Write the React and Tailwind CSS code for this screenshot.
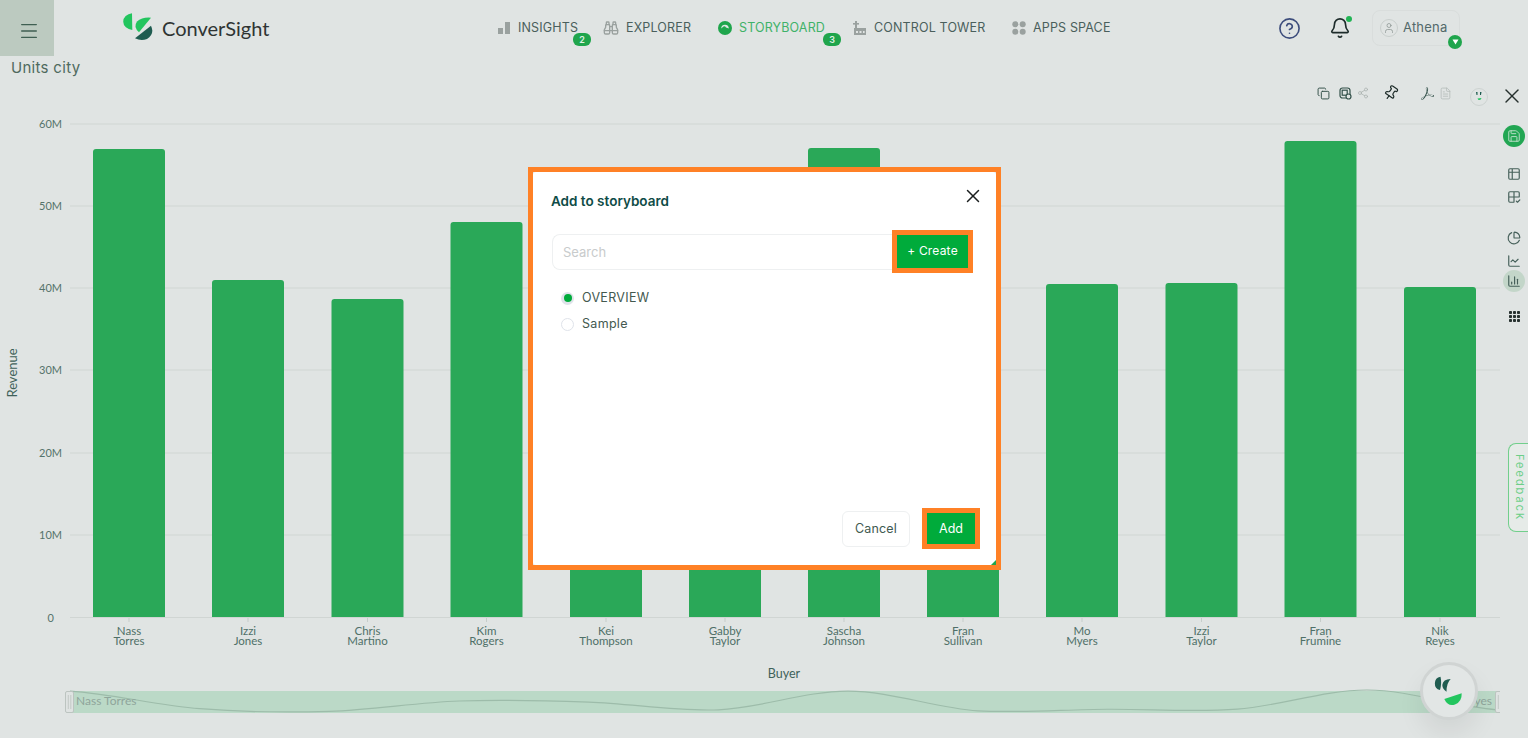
import { Menu, CircleHelp, Bell, User, Binoculars, Copy, Share2, Pin, FileText, X, Save, Table2, Grid2x2Check, ChartPie, ChartLine, ChartColumn } from 'lucide-react';
import { SiAdobeacrobatreader } from 'react-icons/si';

const GRID = [
  { y: 124, label: '60M' },
  { y: 206, label: '50M' },
  { y: 288, label: '40M' },
  { y: 370, label: '30M' },
  { y: 453, label: '20M' },
  { y: 535, label: '10M' },
  { y: 617.5, label: '0' },
];

const BARS = [
  { x: 129, top: 149, a: 'Nass', b: 'Torres', v: 57 },
  { x: 248, top: 280, a: 'Izzi', b: 'Jones', v: 41 },
  { x: 367.5, top: 299, a: 'Chris', b: 'Martino', v: 38.6 },
  { x: 486.5, top: 222, a: 'Kim', b: 'Rogers', v: 48 },
  { x: 606, top: 300, a: 'Kei', b: 'Thompson', v: 47 },
  { x: 725, top: 300, a: 'Gabby', b: 'Taylor', v: 40 },
  { x: 844, top: 148, a: 'Sascha', b: 'Johnson', v: 57 },
  { x: 963, top: 300, a: 'Fran', b: 'Sullivan', v: 39 },
  { x: 1082, top: 284, a: 'Mo', b: 'Myers', v: 40.5 },
  { x: 1201.5, top: 283, a: 'Izzi', b: 'Taylor', v: 40.6 },
  { x: 1320.5, top: 141, a: 'Fran', b: 'Frumine', v: 58 },
  { x: 1440, top: 287, a: 'Nik', b: 'Reyes', v: 40 },
];

// slider preview line, catmull-rom through the bar values
const wavePath = () => {
  const pts = BARS.map((b, i) => [70 + i * 129.7, 712 - (b.v - 38) * 1.1]);
  let d = `M${pts[0][0]} ${pts[0][1]}`;
  for (let i = 0; i < pts.length - 1; i++) {
    const p0 = pts[i - 1] || pts[i];
    const p1 = pts[i];
    const p2 = pts[i + 1];
    const p3 = pts[i + 2] || p2;
    const c1y = Math.min(713, p1[1] + (p2[1] - p0[1]) / 6);
    const c2y = Math.min(713, p2[1] - (p3[1] - p1[1]) / 6);
    d += ` C${p1[0] + 43} ${c1y} ${p2[0] - 43} ${c2y} ${p2[0]} ${p2[1]}`;
  }
  return d;
};

const Chart = () => (
  <svg viewBox="0 104 1500 634" className="block w-[1500px] h-[634px]" style={{ fontFamily: 'Lato, sans-serif' }}>
    {GRID.map((g) => (
      <g key={g.label}>
        <line x1="70" x2="1500" y1={g.y} y2={g.y} stroke="#d0d5d3" strokeWidth="1.2" />
        <text x={g.label === '0' ? 54 : 62} y={g.y + 4} textAnchor="end" fontSize="11" fill="#55736b">{g.label}</text>
      </g>
    ))}
    {BARS.map((b) => (
      <g key={b.x + b.b}>
        <path d={`M${b.x - 36} 617 V${b.top + 3} Q${b.x - 36} ${b.top} ${b.x - 33} ${b.top} H${b.x + 33} Q${b.x + 36} ${b.top} ${b.x + 36} ${b.top + 3} V617 Z`} fill="#2aa858" />
        <line x1={b.x} x2={b.x} y1="618" y2="622" stroke="#c6cdca" />
        <text x={b.x} y="635" textAnchor="middle" fontSize="11.5" fill="#4f7068">{b.a}</text>
        <text x={b.x} y="645" textAnchor="middle" fontSize="11.5" fill="#4f7068">{b.b}</text>
      </g>
    ))}
    <text x="17" y="373" textAnchor="middle" fontSize="13" fill="#3f625a" transform="rotate(-90 17 373)">Revenue</text>
    <text x="784" y="678" textAnchor="middle" fontSize="12.5" fill="#3f625a">Buyer</text>

    <rect x="70" y="691" width="1428" height="22" fill="#bbd9c7" />
    <path d={wavePath()} fill="none" stroke="#9dbcaa" strokeWidth="1.2" />
    <text x="76" y="705" fontSize="12" fill="#8fa59b">Nass Torres</text>
    <text x="1492" y="705" textAnchor="end" fontSize="12" fill="#8fa59b">Nik Reyes</text>
    <rect x="65.5" y="691.5" width="8" height="21" rx="1.5" fill="#dfe3e2" stroke="#bcc4c0" />
    <path d="M68.3 695 V709 M70.8 695 V709" stroke="#c2c9c6" />
    <rect x="1495.5" y="691.5" width="8" height="21" rx="1.5" fill="#dfe3e2" stroke="#bcc4c0" />
    <path d="M1498.3 695 V709 M1500.8 695 V709" stroke="#c2c9c6" />
  </svg>
);

const NavItem = ({ icon, label, gap, active, badge, badgeLeft, className }) => (
  <div className={`relative flex items-center ${className}`}>
    {icon}
    <span className={`${gap} text-[12.5px] tracking-[0.15px] whitespace-nowrap ${active ? 'text-[#3fb269]' : 'text-[#4a5f5c]'}`}>{label}</span>
    {badge && <span className={`absolute ${badgeLeft} top-[14px] w-[18px] h-[13px] rounded-[6px] bg-[#1fa54c] text-[#dff0e5] text-[9px] font-semibold leading-[13px] text-center`}>{badge}</span>}
  </div>
);

const Logo = () => (
  <div className="flex items-center ml-[67px] w-[150px]">
    <svg width="32" height="30" viewBox="0 0 32 30" className="shrink-0 -mt-[2px]">
      <path d="M11 1.3 A10 8.4 0 0 0 11.3 18 Z" fill="#22c55e" />
      <path d="M30 5.7 L18 20.3 Q12 15 16 9.5 Q21 5 30 5.7 Z" fill="#22c55e" />
      <path d="M30 13.7 Q34 22 26 27 Q20 29.5 14 26.3 Z" fill="#1f5c50" />
    </svg>
    <span className="ml-[9px] text-[20px] leading-none text-[#2f3433] whitespace-nowrap" style={{ fontFamily: 'Lato, sans-serif' }}>ConverSight</span>
  </div>
);

const Header = () => (
  <header className="h-14 shrink-0 flex">
    <button className="w-[54px] h-14 bg-[#bccac0] flex items-center justify-center">
      <Menu size={22} strokeWidth={1.4} className="ml-[3px] mt-[6px] text-[#3f5f52]" />
    </button>
    <Logo />
    <nav className="flex items-center h-[56px] ml-[223px] pl-[4px]">
      <NavItem
        className="w-[105px]"
        icon={<svg width="12" height="12" viewBox="0 0 12 12"><rect x="0" y="6" width="5" height="6" fill="#9aa19f" /><rect x="7" y="0" width="5" height="12" fill="#9aa19f" /></svg>}
        gap="ml-[8px]" label="INSIGHTS" badge="2" badgeLeft="left-[75px]"
      />
      <NavItem className="w-[115px]" icon={<Binoculars size={16} strokeWidth={2} className="text-[#9aa19f]" />} gap="ml-[7px]" label="EXPLORER" />
      <NavItem
        className="w-[135px]"
        icon={<svg width="14" height="14" viewBox="0 0 14 14"><circle cx="7" cy="7" r="7" fill="#1fa54c" /><path d="M3.2 7.5 A3.8 3.8 0 0 1 10.8 7.5 L8 6.5 Q7 4.8 5.5 5.6 Z" fill="#dfe6e2" /></svg>}
        gap="ml-[7px]" label="STORYBOARD" active badge="3" badgeLeft="left-[105px]"
      />
      <NavItem
        className="w-[159px]"
        icon={<svg width="14" height="14" viewBox="0 0 14 14" fill="#9aa19f"><rect x="2" y="0" width="2" height="7" /><rect x="0" y="2" width="6" height="1.6" /><rect x="1" y="7" width="12" height="7" /><rect x="3" y="10" width="2" height="2" fill="#e0e4e3" /><rect x="6.5" y="10" width="2" height="2" fill="#e0e4e3" /><rect x="10" y="10" width="1.6" height="2" fill="#e0e4e3" /></svg>}
        gap="ml-[7px]" label="CONTROL TOWER"
      />
      <NavItem
        icon={<svg width="14" height="14" viewBox="0 0 14 14" fill="#9aa19f"><circle cx="3.3" cy="3.3" r="3" /><circle cx="10.7" cy="3.3" r="3" /><circle cx="3.3" cy="10.7" r="3" /><circle cx="10.7" cy="10.7" r="3" /></svg>}
        gap="ml-[7px]" label="APPS SPACE"
      />
    </nav>
    <div className="ml-auto flex items-center h-14 pr-[68px]">
      <CircleHelp size={23} strokeWidth={1.7} className="text-[#3d4d7c]" />
      <div className="relative ml-[28px]">
        <Bell size={22} strokeWidth={1.8} className="text-[#1d2b2a]" />
        <span className="absolute -top-[1px] -right-[1px] w-[6px] h-[6px] rounded-full bg-[#22b455]" />
      </div>
      <div className="relative ml-[21px] w-[88px] h-[36px] -mt-[1px] border border-[#d9dddc] rounded-lg flex items-center pl-[7px]">
        <span className="w-[18px] h-[18px] rounded-full border border-[#c9cfcd] flex items-center justify-center">
          <User size={12} strokeWidth={1.5} className="text-[#8b9492]" />
        </span>
        <span className="ml-[5px] text-[13px] tracking-[0.2px] text-[#53696a]">Athena</span>
        <span className="absolute left-[75px] top-[24px] w-[14px] h-[14px] rounded-full bg-[#1fa54c] flex items-center justify-center">
          <svg width="7" height="6" viewBox="0 0 7 6"><path d="M0.5 0.5 H6.5 L3.5 5.5 Z" fill="#fff" /></svg>
        </span>
      </div>
    </div>
  </header>
);

const Toolbar = () => (
  <div className="h-[24px] flex items-center pl-[1317px] pt-[2px]">
    <Copy size={13} strokeWidth={1.8} className="text-[#33514a]" />
    <svg width="13" height="13" viewBox="0 0 13 13" fill="none" stroke="#33514a" strokeWidth="1.2" className="ml-[9px]">
      <rect x="1" y="1" width="10" height="10" rx="2.5" />
      <rect x="3.2" y="3.2" width="5" height="5" />
      <circle cx="9.5" cy="9.5" r="2.5" fill="#e0e4e3" />
    </svg>
    <Share2 size={12} strokeWidth={1.5} className="ml-[5px] text-[#a9b1af]" />
    <Pin size={16} strokeWidth={1.8} className="ml-[14px] rotate-[35deg] text-[#1e2c2a]" />
    <SiAdobeacrobatreader size={13} className="ml-[22px] text-[#33514a]" />
    <FileText size={13} strokeWidth={1.5} className="ml-[5px] text-[#b4bbb9]" />
    <span className="ml-[18px] mt-[7px] w-[18px] h-[18px] rounded-full border border-[#cdd3d1] flex items-center justify-center">
      <svg width="10" height="11" viewBox="0 0 10 11"><path d="M2 1 H3.5 V4 H2.5 Z M6 1 H7.5 L7 4 H6 Z" fill="#1f5c50" /><path d="M3.5 7.5 L7.5 7 Q7 9.5 4.5 9 Z" fill="#22c55e" /></svg>
    </span>
  </div>
);

const Rail = () => (
  <aside className="w-[28px] shrink-0 flex flex-col items-center pt-[32px] text-[#46605a]">
    <X size={24} strokeWidth={1.4} className="mr-[4px] -my-[4px] text-[#26302e]" />
    <span className="mt-[21px] w-[22px] h-[22px] rounded-full bg-[#22a653] flex items-center justify-center">
      <Save size={14} strokeWidth={1.6} className="text-[#bfe0cb]" />
    </span>
    <Table2 size={14} strokeWidth={2} className="mt-[20px]" />
    <Grid2x2Check size={14} strokeWidth={2} className="mt-[9px]" />
    <ChartPie size={14} strokeWidth={2} className="mt-[27px]" />
    <ChartLine size={14} strokeWidth={2} className="mt-[9px]" />
    <span className="mt-[2px] w-[22px] h-[22px] rounded-full bg-[#c3d6c9] flex items-center justify-center">
      <ChartColumn size={14} strokeWidth={2} />
    </span>
    <svg width="11" height="11" viewBox="0 0 11 11" fill="#26302e" className="mt-[19px]">
      {[0, 4, 8].map((x) => [0, 4, 8].map((y) => <rect key={`${x}-${y}`} x={x} y={y} width="3" height="3" rx="0.8" />))}
    </svg>
  </aside>
);

const Radio = ({ label, checked }) => (
  <label className="flex items-center h-[26.5px]">
    {checked ? (
      <span className="w-[13px] h-[13px] rounded-full bg-[#dfe3ea] flex items-center justify-center">
        <span className="w-[8px] h-[8px] rounded-full bg-[#00ab3b]" />
      </span>
    ) : (
      <span className="w-[13px] h-[13px] rounded-full border border-[#dfe3ea] bg-white" />
    )}
    <span className="ml-[8px] text-[12.5px] tracking-[0.3px] text-[#43594f]">{label}</span>
  </label>
);

const AddModal = () => (
  <div className="absolute left-[528px] top-[167px] w-[473px] h-[403px] border-[5px] border-[#ff8126]">
    <div className="relative w-full h-full bg-white rounded-[3px] flex flex-col pl-[18px] pr-[23px]">
      <div className="flex items-start justify-between pt-[20px] h-[58px]">
        <h2 className="text-[13.5px] font-semibold leading-[18px] text-[#0f4c47]">Add to storyboard</h2>
        <X size={22} strokeWidth={1.6} className="-mt-[7px] -mr-[11px] text-[#1b1f1f]" />
      </div>
      <div className="flex items-center h-[43px]">
        <input placeholder="Search" className="w-[340px] h-[36px] ml-[1px] pl-[10px] border border-[#eef0f1] border-r-0 rounded-l-lg text-[13px] outline-none placeholder:text-[#c8cbcc]" />
        <div className="border-[5px] border-[#ff8126] w-[81px] h-[43px]">
          <button className="w-full h-full pb-[1px] bg-[#00ab3b] text-white text-[12px] tracking-[0.2px]">+ Create</button>
        </div>
      </div>
      <div className="mt-[12px] pl-[10px] flex flex-col">
        <Radio label="OVERVIEW" checked />
        <Radio label="Sample" />
      </div>
      <div className="mt-auto mb-[16px] flex items-center justify-end -mr-[7px]">
        <button className="w-[68px] h-[36px] pt-[1px] border border-[#eef0f1] rounded-md text-[12.5px] tracking-[0.2px] text-[#3e5a50]">Cancel</button>
        <div className="ml-[12px] border-[5px] border-[#ff8126] w-[58px] h-[41px]">
          <button className="w-full h-full pt-[1px] bg-[#00ab3b] text-white text-[12.5px]">Add</button>
        </div>
      </div>
      <svg width="5" height="5" viewBox="0 0 5 5" className="absolute right-0 bottom-0"><path d="M5 0 V5 H0 Z" fill="#1fa54c" /></svg>
    </div>
  </div>
);

const ChatBubble = () => (
  <div className="absolute left-[1420px] top-[662px] w-[58px] h-[58px] rounded-full border-[3px] border-[#d0d4d3] bg-[#e2e6e5] shadow-[0_14px_26px_rgba(0,0,0,0.07)] flex items-center justify-center">
    <svg width="36" height="36" viewBox="0 0 36 36">
      <path d="M9.5 3.7 A6.8 6.8 0 0 0 9 17 Q11 10 9.5 3.7 Z" fill="#1f5c50" />
      <path d="M19.7 6 Q12 6 11.3 12 Q11.5 16 15.5 18.7 Q15.5 10 19.7 6 Z" fill="#1f5c50" />
      <path d="M13.3 26 L30.7 20.3 Q31 29 24 31.5 Q17 34 13.3 26 Z" fill="#22c55e" />
    </svg>
  </div>
);

const App = () => (
  <div className="relative w-[1528px] h-[738px] overflow-hidden bg-[#e0e4e3]" style={{ fontFamily: 'Inter, sans-serif' }}>
    <Header />
    <main className="flex rounded-t-lg">
      <div className="w-[1500px] shrink-0">
        <div className="h-[24px] pl-[11px] pt-[1px] text-[15px] leading-[22px] tracking-[0.3px] text-[#4f6a5e]">Units city</div>
        <Toolbar />
        <Chart />
      </div>
      <Rail />
    </main>
    <ChatBubble />
    <div className="absolute right-0 top-[443px] w-[20px] h-[89px] border border-r-0 border-[#72cf8c] rounded-l-lg bg-[#e6ebe8] flex items-center justify-center">
      <span className="ml-[2px] text-[11px] tracking-[2px] text-[#6ccf88] [writing-mode:vertical-rl]">Feedback</span>
    </div>
    <AddModal />
  </div>
);

export default App;
